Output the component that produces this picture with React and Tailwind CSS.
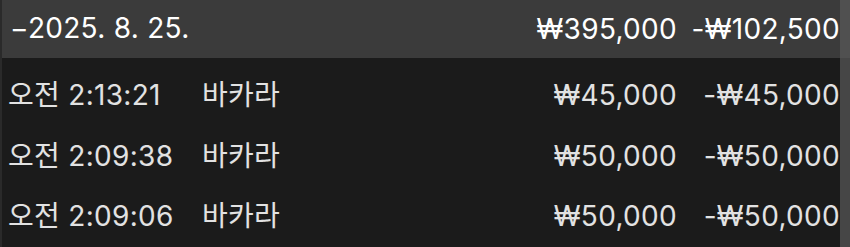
import React from "react";

const rows = [
  { time: "오전 2:13:21", game: "바카라", amount: "₩45,000", diff: "-₩45,000" },
  { time: "오전 2:09:38", game: "바카라", amount: "₩50,000", diff: "-₩50,000" },
  { time: "오전 2:09:06", game: "바카라", amount: "₩50,000", diff: "-₩50,000" },
];

const font = { fontFamily: "Inter, 'Noto Sans CJK KR', sans-serif" };

export default function App() {
  return (
    <div className="w-[850px] h-[247px] overflow-hidden flex bg-[#1b1b1b]" style={font}>
      <div className="flex-1 flex flex-col border-l-2 border-[#2a2a2a]">
        <div className="h-[58px] bg-[#3b3b3b] flex items-center pl-[8px] text-[28px] text-white tracking-[0.3px]">
          <div className="flex-1 pb-[2px]">−2025. 8. 25.</div>
          <div className="text-right">₩395,000</div>
          <div className="w-[163px] text-right">-₩102,500</div>
        </div>
        <div className="flex flex-col pt-[7px]">
          {rows.map((r, i) => (
            <div key={i} className="h-[60.5px] flex items-center pl-[6px] text-[28px] text-[#e2e2e2] tracking-[0.3px]">
              <div className="w-[194px]">{r.time}</div>
              <div className="flex-1">{r.game}</div>
              <div className="text-right">{r.amount}</div>
              <div className="w-[163px] text-right">{r.diff}</div>
            </div>
          ))}
        </div>
      </div>
      <div className="w-[10px] flex flex-col">
        <div className="h-[58px] bg-[#505050]" />
        <div className="flex-1 bg-[#464646]" />
      </div>
    </div>
  );
}
